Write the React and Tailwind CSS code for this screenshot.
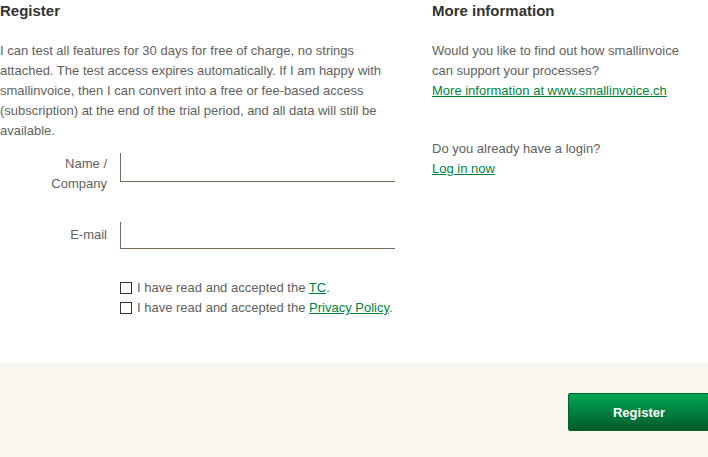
export default function App() {
  return (
    <div className="w-[708px] h-[457px] overflow-hidden bg-white font-['Liberation_Sans',Arial,sans-serif] text-[13px] leading-[20px] text-[#616161]">
      <div className="flex gap-8 h-[363px]">
        <div className="w-[400px] shrink-0">
          <h2 className="text-[15px] font-bold text-[#333] leading-[22px]">Register</h2>
          <p className="mt-[19px] pr-1">
            I can test all features for 30 days for free of charge, no strings attached. The test access expires automatically. If I am happy with smallinvoice, then I can convert into a free or fee-based access (subscription) at the end of the trial period, and all data will still be available.
          </p>

          <div className="mt-[12px] flex">
            <label className="w-[107px] text-right pt-[1px]">
              Name /<br />Company
            </label>
            <div className="ml-[13px] w-[275px] h-[29px] border-l border-b border-[#7b6a58]" />
          </div>

          <div className="mt-[28px] flex">
            <label className="w-[107px] text-right pt-[3px]">E-mail</label>
            <div className="ml-[13px] w-[275px] h-[27px] border-l border-b border-[#7b6a58]" />
          </div>

          <div className="mt-[29px] ml-[120px] flex flex-col">
            <div className="flex items-center">
              <span className="w-[12px] h-[12px] border border-[#333] bg-white mr-[5px]" />
              <span>
                I have read and accepted the <a className="text-[#00843d] underline">TC</a>.
              </span>
            </div>
            <div className="flex items-center">
              <span className="w-[12px] h-[12px] border border-[#333] bg-white mr-[5px]" />
              <span>
                I have read and accepted the <a className="text-[#00843d] underline">Privacy Policy</a>.
              </span>
            </div>
          </div>
        </div>

        <div className="flex-1">
          <h2 className="text-[15px] font-bold text-[#333] leading-[22px]">More information</h2>
          <p className="mt-[19px]">
            Would you like to find out how smallinvoice<br />can support your processes?
          </p>
          <a className="block text-[#00843d] underline">More information at www.smallinvoice.ch</a>
          <p className="mt-[38px]">Do you already have a login?</p>
          <a className="block text-[#00843d] underline">Log in now</a>
        </div>
      </div>

      <div className="h-[94px] bg-[#f9f6f0] flex justify-end pt-[30px]">
        <button className="w-[142px] h-[38px] -mr-[2px] pt-[1px] rounded-[2px] border border-[#00612c] bg-gradient-to-b from-[#00a652] to-[#005c2b] text-white font-bold text-[13px]">
          Register
        </button>
      </div>
    </div>
  );
}
